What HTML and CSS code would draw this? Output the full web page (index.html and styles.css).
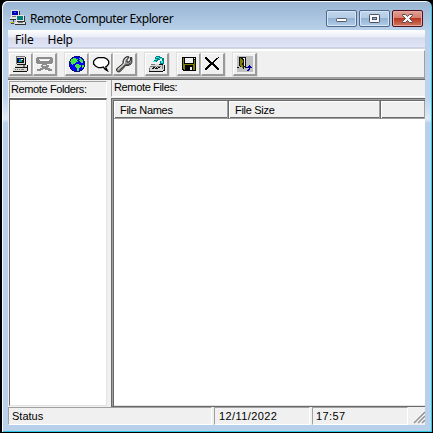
FILE: index.html
```html
<!DOCTYPE html>
<html lang="en">
<head>
<meta charset="utf-8">
<title>Remote Computer Explorer</title>
<link rel="stylesheet" href="styles.css">
</head>
<body>
<div class="window">
  <header class="titlebar">
    <svg class="app-icon" width="16" height="16" viewBox="0 0 16 16" shape-rendering="crispEdges">
      <path fill="#e4e4e0" d="M1 0h8v7H1zM0 7h8v2H0zM6 5h8v7H6zM5 12h10v2H5z"/>
      <path fill="#333" d="M9 1h1v4H9zM0 9h6v1H0zM14 6h1v6h-1zM7 11h7v1H7zM5 14h11v1H5zM15 12h1v2h-1z"/>
      <path fill="#0000b0" d="M2 1h6v4H2z"/><path fill="#2870ff" d="M4 2h2v1H4z"/>
      <path fill="#008080" d="M7 6h6v4H7z"/><path fill="#777" d="M2 6h4v1H2zM8 12h5v1H8z"/>
      <path fill="#c5b83a" d="M0 12h4v1H0z"/><path fill="#444" d="M3 10h1v2H3zM1 13h3v1H1z"/>
    </svg>
    <h1>Remote Computer Explorer</h1>
    <div class="controls">
      <button class="ctl" aria-label="Minimize"><svg width="29" height="15"><rect x="9.500" y="7.500" width="10" height="3" rx=".7" fill="#fff" stroke="#555a6b"/></svg></button>
      <button class="ctl" aria-label="Maximize"><svg width="29" height="15"><rect x="9.500" y="3.500" width="10" height="8" rx=".7" fill="#f8f8fa" stroke="#4d5264"/><rect x="12.500" y="6.500" width="4" height="2" fill="#91b5dc" stroke="#4d5264"/></svg></button>
      <button class="ctl close" aria-label="Close"><svg width="29" height="15"><path d="M9.500 3.500h3l2 2 2-2h3v1l-3 3 3 3v1h-3l-2-2-2 2h-3v-1l3-3-3-3z" fill="#f8f8f8" stroke="#594850"/></svg></button>
    </div>
  </header>
  <div class="client">
    <nav class="menu"><span>File</span><span class="help">Help</span></nav>
    <div class="toolbar">
      <button class="tool"><svg width="16" height="16" viewBox="0 0 16 16" shape-rendering="crispEdges">
        <path fill="#d8d8d0" d="M3 0h9v8H3zM2 9h12v2H2zM0 12h14v3H0z"/>
        <path fill="#777" d="M3 0h9v1H3zM3 1h1v7H3zM10 9h2v2h-2z"/><path fill="#111" d="M12 1h1v8H4V8h8zM2 11h12v1H2zM0 15h14v1H0zM14 9h1v6h-1z"/>
        <path fill="#111" d="M4 2h7v5H4z"/><path fill="#0000f0" d="M5 2h2v1H5zM5 5h1v1H5z"/><path fill="#00a0a0" d="M6 3h3v3H6z"/><path fill="#e8e8e8" d="M8 3h2v1H8z"/>
        <path fill="#777" d="M2 13h1v1H2zM4 13h1v1H4zM6 13h1v1H6zM8 13h3v1H8z"/>
      </svg></button>
      <button class="tool"><svg width="17" height="15" viewBox="0 0 17 15" shape-rendering="crispEdges">
        <path fill="#fff" d="M4 3h9v1H4zM2 7h14v1H2zM3 12h4v1H3zM11 13h5v1h-5zM14 8h2v1h-2z"/>
        <path fill="#8c8c8c" fill-rule="evenodd" d="M1 0h15v1h1v5h-1v1h-5v1h2v2h-1v1h2v1h2v2h-4v-1H9v-1H7v1H5v1H1v-2h3v-1h2v-1H5V8h1V7H1V6H0V1h1zM3 2v1h1v1h9V3h1V2zM7 8v1h3V8z"/>
      </svg></button>
      <button class="tool gap"><svg width="16" height="16" viewBox="0 0 16 16" shape-rendering="crispEdges">
        <path fill="#101070" d="M5 0h6v1h2v1h1v1h1v2h1v6h-1v2h-1v1h-1v1h-2v1H5v-1H3v-1H2v-1H1v-2H0V5h1V3h1V2h1V1h2z"/>
        <path fill="#0000ff" d="M5 1h6v1h2v1h1v2h1v6h-1v2h-1v1h-2v1H5v-1H3v-1H2v-2H1V5h1V3h1V2h2z"/>
        <path fill="#48e640" d="M4 2h3v1h2v1H8v1h1v1H7v1H6v1H4v1H3V8H2V6H1V5h1V3h2zM10 2h2v1h1v1h1v3h-2V6h-1V5h-1V4h1V3h-1zM7 8h3v1h2v2h-1v1h-1v3H8v-3H7v-1H6V9h1zM13 9h2v2h-1v1h-1z"/>
      </svg></button>
      <button class="tool"><svg width="18" height="16" viewBox="0 0 18 16">
        <path fill="#fff" stroke="#000" stroke-width="1.300" d="M3.500 3 6 1.600h6L15 3l1.700 2.200v2.600L15 10l-1.200.7.200 1.300 1.400 2.700-2.100-1.200-2-2.500-2 .7H6.500L3.500 10 1.600 8V5.200z"/>
        <path fill="none" stroke="#888" stroke-width=".8" d="m15.700 10.500-1 .8"/>
      </svg></button>
      <button class="tool"><svg width="17" height="17" viewBox="0 0 17 17">
        <path fill="#949490" stroke="#111" stroke-width=".9" d="M7 5 8.500 2 10.700.7h2.100v1.200L11 3.500V6h2l1.400-2V1.500h1.400v5L14.500 8.500l-2.500 1H9.700L4 15.800H1.500L.6 14.500v-1.700L7 7.500z"/>
        <path fill="none" stroke="#eee" d="m2 13.300 6.300-5.600.6-3.700 2-2"/><path fill="none" stroke="#444" d="m3.500 14.600 5.800-5.800h3l2-2"/>
      </svg></button>
      <button class="tool gap"><svg width="18" height="16" viewBox="0 0 18 16" shape-rendering="crispEdges">
        <path fill="#d8d8d8" d="M4 8h12v1h1v5h-2v1H1v-4h2z"/><path fill="#777" d="M3 8h4v1H3zM2 10h6v1H2zM9 10h4v1H9zM14 9h1v4h-1zM1 12h1v3H1z"/><path fill="#111" d="M1 15h14v-1h2v1h-2v1H1zM5 11h2v1H5zM8 11h1v1H8zM10 11h2v1h-2zM4 12h2v1H4zM7 12h3v1H7zM16 9h1v5h-1zM11 8h4v1h-4z"/>
        <path fill="#057b80" d="M8 0h4v1h2v1h2v4h-2V3h-2v1H9V3H7V1h1zM6 4h4v1H9v1H6zM12 5h4v3h-4z"/><path fill="#20eeee" d="M8 1h3v1h3v1h-3V2H8zM7 3h2v1H7zM13 5h2v2h-2zM5 5h3v1H5z"/>
      </svg></button>
      <button class="tool gap"><svg width="14" height="14" viewBox="0 0 14 14" shape-rendering="crispEdges">
        <path d="M0 0h14v14H1v-1H0z"/><path fill="#808000" d="M1 1h1v11H1zM2 7h10v1H2zM12 3h1v10h-1zM2 8h1v5H2zM11 8h1v5h-1z"/><path fill="#efefef" d="M3 1h8v5H3zM12 1h1v1h-1zM8 10h2v3H8z"/>
      </svg></button>
      <button class="tool"><svg width="15" height="14" viewBox="0 0 15 14" shape-rendering="crispEdges">
        <path d="M0 0h2v1h1v1h1v1h1v1h1v1h2V4h1V3h1V2h1V1h2V0h1v1h-1v1h-1v1h-1v1h-1v1H9v2h1v1h1v1h1v1h1v1h1v2h-2v-1h-1v-1h-1v-1H9V9H8V8H6v1H5v1H4v1H3v1H2v1H0v-2h1v-1h1V9h1V8h1V7h1V6H4V5H3V4H2V3H1V2H0z"/>
      </svg></button>
      <button class="tool gap"><svg width="16" height="16" viewBox="0 0 16 16" shape-rendering="crispEdges">
        <path fill="#c0c0c0" d="M0 0h16v16H0z"/><path fill="#efefef" d="M6 2h3v9H6z"/><path fill="#111" d="M2 1h7v10H7v-1h1V2H6v1h1v10H6v-1H5v-1H3v-1H2zM0 11h2v1H0zM8 11h2v1H8z"/><path fill="#808000" d="M3 2h1v1h1v1h1v8H5v-1H4v-1H3z"/><path fill="#111" d="M5 7h1v2H5z"/><path fill="#0000a0" d="M12 9h1v1h1v1h1v1h-2v2h-1v1h-2v-1h1v-1h1v-1h-2v-1h1v-1h1z"/>
      </svg></button>
    </div>
    <main class="panes">
      <section class="folders"><div class="label">Remote Folders:</div><div class="list"></div></section>
      <section class="files"><div class="label">Remote Files:</div>
        <div class="table"><div class="columns"><div>File Names</div><div>File Size</div><div></div></div></div>
      </section>
    </main>
    <footer class="status"><div>Status</div><div class="date">12/11/2022</div><div class="time">17:57</div>
      <svg width="15" height="17" viewBox="0 0 15 17"><path d="M4 16 15 5M8 16l7-7M12 16l3-3" stroke="#999" stroke-width="1.700"/><path d="M3 15 14 4M7 15l8-8M11 15l4-4" stroke="#fff" stroke-width=".8"/></svg>
    </footer>
  </div>
</div>
</body>
</html>
```
FILE: styles.css
```css
* { box-sizing: border-box; }
body { margin: 0; background: #000; overflow: hidden; font: 11px "Liberation Sans", Arial, sans-serif; color: #000; }
.window { width: 433px; height: 433px; padding: 1px 6px 6px; border: solid #000; border-width: 1px 1px 1px 2px; border-radius: 7px 7px 0 0; background: linear-gradient(#98b4d2, #b8d0e9 29px, #bbd3ec 95px, #dfeaf6 118px, #b8d0e9 122px); box-shadow: inset 1px 1px #f8fbff, inset -1px -1px #29c9e5; }
.titlebar { display: flex; height: 28px; }
.app-icon { margin: 8px 0 0 2px; }
h1 { margin: 8px 0 0 4px; font: 12px/18px "Noto Sans", sans-serif; letter-spacing: -.46px; white-space: nowrap; }
.controls { display: flex; gap: 2px; margin: 8px 3px 0 auto; }
.ctl { width: 31px; height: 17px; padding: 0; border: 1px solid #50698d; border-radius: 2px; background: linear-gradient(#c1d6eb, #b2cbe4 49%, #94b3d3 50%, #b1cee9); box-shadow: inset 0 0 0 1px #d5e5f5; }
.ctl svg { display: block; }
.close { border-color: #4c121d; background: linear-gradient(#e3a092, #d47c6c 49%, #b93720 50%, #cc795f); box-shadow: inset 0 0 0 1px #e7aaa0; }
.client { width: 417px; height: 395px; background: #f0f0f0; }
.menu { display: flex; height: 20px; padding-left: 7px; border-bottom: 1px solid #fff; background: linear-gradient(#fff, #e8ecf6 7px, #d5daed 8px, #e1e6f6 17px, #b4bccf 18px, #f0f0f0 19px); font: 12px/20px "Noto Sans", sans-serif; letter-spacing: -.15px; }
.help { margin-left: 14px; letter-spacing: -.25px; }
.toolbar { display: flex; height: 29px; padding: 2px 0 0 1px; border-top: 1px solid #fff; border-right: 1px solid #a0a0a0; border-bottom: 2px solid #a0a0a0; }
.tool { display: flex; width: 24px; height: 23px; padding: 0; align-items: center; justify-content: center; border: solid; border-width: 1px 2px 2px 1px; border-color: #fff #999 #999 #fff; background: #f0f0f0; box-shadow: 0 0 0 .5px #ccc; }
.tool svg { flex: none; }
.gap { margin-left: 8px; }
.panes { display: flex; height: 328px; border-top: 1px solid #696969; }
.folders { width: 99px; padding: 1px 0 0 1px; }
.folders .label { height: 17px; padding: 1px 0 0 1px; border: 1px solid #a0a0a0; border-right-color: #fff; border-bottom-color: #fff; letter-spacing: -.38px; line-height: 13px; }
.list { height: 308px; border: solid; border-width: 2px 1px 1px; border-color: #696969 #e3e3e3 #e3e3e3 #696969; background: #fff; }
.files { flex: 1; min-width: 0; margin-left: 4px; }
.files .label { height: 17px; padding-left: 2px; border-left: 1px solid #a0a0a0; border-bottom: 1px solid #fff; line-height: 15px; letter-spacing: -.35px; }
.table { height: 309px; margin-top: 1px; border: solid #696969; border-width: 1px 0 1px 1px; background: #fff; box-shadow: inset 1px 1px #a0a0a0, inset 2px 2px #696969, inset 0 -1px #e3e3e3; padding: 2px 0 0 2px; }
.columns { display: grid; grid-template-columns: 115px 152px 1fr; height: 17px; border-bottom: 1px solid #696969; background: #f0f0f0; }
.columns div { border-right: 1px solid #696969; padding-left: 6px; line-height: 18px; box-shadow: inset -1px -1px #a0a0a0, inset 1px 1px #fff; letter-spacing: -.3px; }
.columns div:last-child { border: 0; }
.status { display: grid; grid-template-columns: 204px 96px 96px 1fr; gap: 2px; height: 18px; padding-bottom: 1px; }
.status div { padding-left: 3px; border: 1px solid #a0a0a0; border-right-color: #fff; border-bottom-color: #fff; line-height: 16px; }
.status .date { padding-left: 4px; letter-spacing: .4px; }
.status .time { letter-spacing: .4px; }
```
